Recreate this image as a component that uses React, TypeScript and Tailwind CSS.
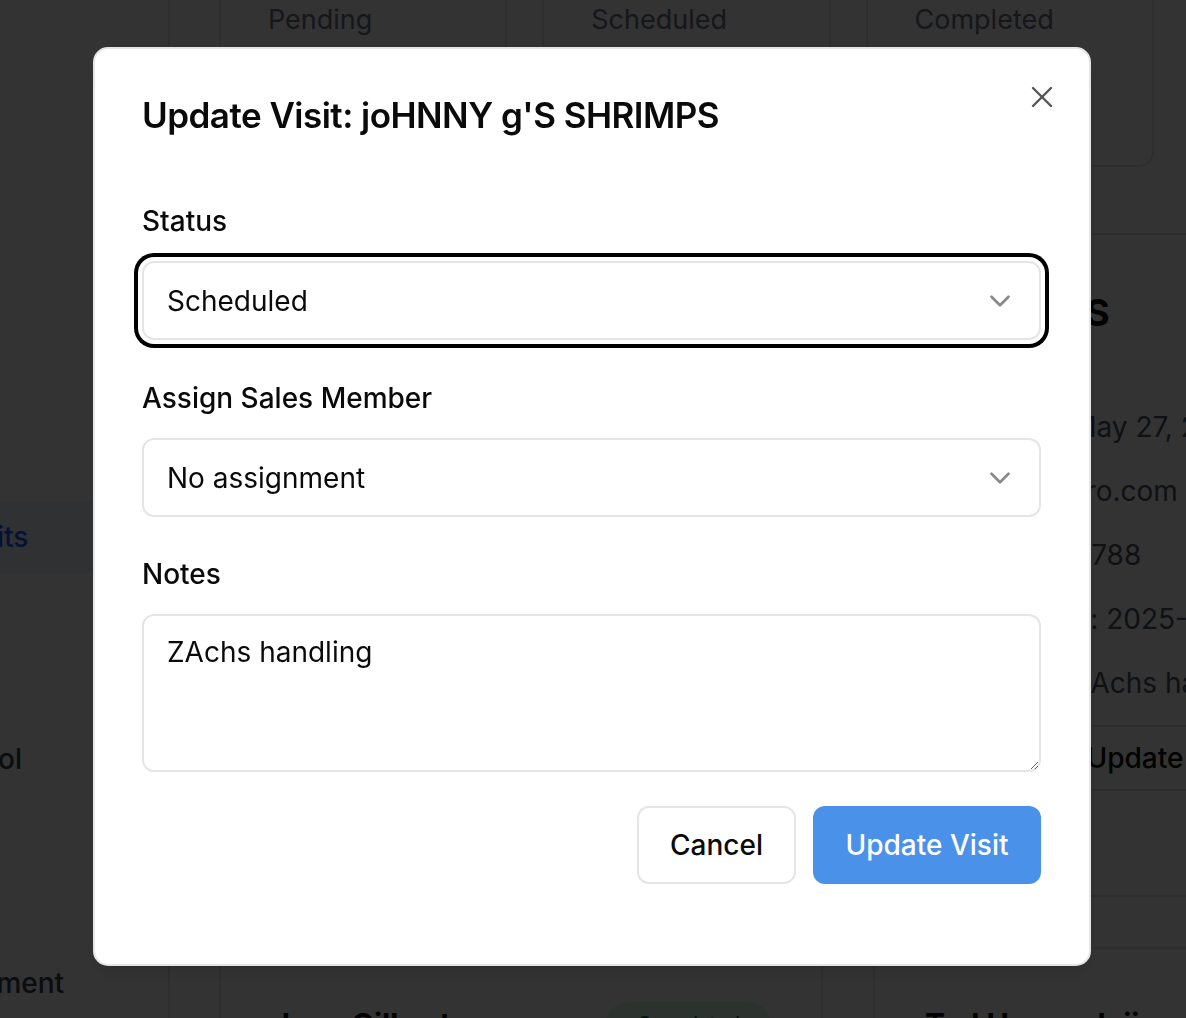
import { Calendar, Mail, Phone, Clock, FileText } from "lucide-react";

const stats = ["Pending", "Scheduled", "Completed", "Cancelled"];

const detailRows = [
    { icon: Calendar, text: "Day: May 27, 2025", shift: "ml-[3px]" },
    { icon: Mail, text: "Email: ro.com", shift: "-ml-[2px]" },
    { icon: Phone, text: "Phone: 4788", shift: "-ml-[28px]" },
    { icon: Clock, text: "Created: 2025-05-20", shift: "-ml-[16px]" },
    { icon: FileText, text: "Notes: ZAchs handling", shift: "-ml-[22px]" },
];

function Chevron() {
    return (
        <svg
            width="34"
            height="34"
            viewBox="0 0 24 24"
            fill="none"
            stroke="currentColor"
            strokeWidth="1.9"
            strokeLinecap="round"
            strokeLinejoin="round"
            className="shrink-0 text-[#8a8a8a]"
        >
            <path d="m6 9 6 6 6-6" />
        </svg>
    );
}

function Background() {
    return (
        <div className="flex -ml-[64px] w-[1560px] h-[1018px]">
            {/* sidebar */}
            <aside className="w-[234px] shrink-0 border-r-2 border-[#e5e5e5] text-[28px] leading-none font-medium">
                <div className="h-[501px]" />
                <div className="h-[72px] mr-[8px] rounded-[12px] bg-blue-50 text-blue-600 flex items-center pl-[19px]">
                    Visits
                </div>
                <div className="h-[150px]" />
                <div className="h-[72px] flex items-center pl-[29px] text-gray-700">Tool</div>
                <div className="h-[152px]" />
                <div className="h-[72px] flex items-center pl-[11px] text-gray-700">Payment</div>
            </aside>

            {/* main */}
            <main className="pl-[49px]">
                <div className="grid grid-cols-4 gap-[35px] w-[1258px] -mt-[40px]">
                    {stats.map((s) => (
                        <div
                            key={s}
                            className="h-[207px] rounded-[15px] border-2 border-[#e5e5e5] px-[47px] pt-[44px] text-[27px] leading-none text-gray-500"
                        >
                            {s}
                        </div>
                    ))}
                </div>

                <div className="grid grid-cols-2 gap-[50px] w-[1258px] mt-[66px]">
                    <div className="h-[664px] rounded-[15px] border-2 border-[#e5e5e5]" />

                    <div className="h-[664px] rounded-[15px] border-2 border-[#e5e5e5] flex flex-col">
                        <div className="pl-[60px] pt-[59px] text-[37px] leading-none font-bold text-[#0a0a0a]">
                            BURGERS
                        </div>
                        <div className="mt-[64px] pl-[48px] flex flex-col">
                            {detailRows.map((r) => (
                                <div key={r.text} className="h-[64px] flex items-center text-[28px] leading-none text-gray-600">
                                    <r.icon size={30} className="mr-[48px] text-gray-500" />
                                    <span className={r.shift}>{r.text}</span>
                                </div>
                            ))}
                        </div>
                        <div className="mt-[10px] border-t-2 border-[#e5e5e5] h-[64px] flex items-center justify-center pr-[14px] text-[28px] leading-none font-medium text-[#0a0a0a]">
                            Update Visit
                        </div>
                        <div className="border-t-2 border-[#e5e5e5]" />
                    </div>

                    <div className="h-[300px] rounded-[15px] border-2 border-[#e5e5e5] px-[50px] pt-[53px]">
                        <div className="flex items-center justify-between">
                            <span className="text-[30px] leading-none font-bold text-[#0a0a0a]">drew Gilbert</span>
                            <span className="h-[44px] w-[165px] rounded-full bg-green-100 text-green-800 text-[20px] flex items-center justify-center">
                                Completed
                            </span>
                        </div>
                    </div>
                    <div className="h-[300px] rounded-[15px] border-2 border-[#e5e5e5] px-[50px] pt-[53px]">
                        <div className="flex items-center h-[44px]">
                            <span className="text-[30px] leading-none font-bold text-[#0a0a0a]">Ted Hamm Jaii</span>
                        </div>
                    </div>
                </div>
            </main>
        </div>
    );
}

export default function App() {
    return (
        <div className="relative h-[1018px] w-full overflow-hidden bg-white font-[family-name:Inter,sans-serif]">
            <Background />

            <div className="fixed inset-0 bg-black/80" />

            <div className="fixed left-[93px] top-[47px] w-[998px] rounded-[15px] border-2 border-[#e5e5e5] bg-white pl-[47px] pr-[48px] pt-[49px] pb-[80px] shadow-lg text-[#0a0a0a]">
                <button
                    type="button"
                    className="absolute right-[29px] top-[30px] text-[#555]"
                >
                    <svg
                        width="36"
                        height="36"
                        viewBox="0 0 24 24"
                        fill="none"
                        stroke="currentColor"
                        strokeWidth="1.6"
                        strokeLinecap="round"
                        strokeLinejoin="round"
                    >
                        <path d="M18 6 6 18" />
                        <path d="m6 6 12 12" />
                    </svg>
                </button>

                <h2 className="text-[35px] font-semibold leading-none tracking-[-0.015em]">
                    Update Visit: joHNNY g'S SHRIMPS
                </h2>

                <label className="block mt-[74px] text-[28px] font-medium leading-none">Status</label>
                <button
                    type="button"
                    className="mt-[26px] h-[79px] w-full rounded-[12px] border-2 border-[#e5e5e5] bg-white flex items-center justify-between pl-[23px] pr-[22px] ring-4 ring-black ring-offset-4 ring-offset-white"
                >
                    <span className="text-[28px] leading-none">Scheduled</span>
                    <Chevron />
                </button>

                <label className="block mt-[44px] text-[28px] font-medium leading-none">Assign Sales Member</label>
                <button
                    type="button"
                    className="mt-[26px] h-[79px] w-full rounded-[12px] border-2 border-[#e5e5e5] bg-white flex items-center justify-between pl-[23px] pr-[22px]"
                >
                    <span className="text-[28px] leading-none">No assignment</span>
                    <Chevron />
                </button>

                <label className="block mt-[43px] text-[28px] font-medium leading-none">Notes</label>
                <textarea
                    defaultValue="ZAchs handling"
                    className="mt-[26px] block h-[158px] w-full rounded-[12px] border-2 border-[#e5e5e5] px-[23px] py-[16px] text-[28px] leading-[40px] outline-none"
                />

                <div className="mt-[34px] flex justify-end gap-[17px]">
                    <button
                        type="button"
                        className="h-[78px] w-[159px] rounded-[12px] border-2 border-[#e5e5e5] bg-white text-[28px] font-medium"
                    >
                        Cancel
                    </button>
                    <button
                        type="button"
                        className="h-[78px] w-[228px] rounded-[12px] bg-[#4a92e9] text-white text-[28px] font-medium"
                    >
                        Update Visit
                    </button>
                </div>
            </div>
        </div>
    );
}
